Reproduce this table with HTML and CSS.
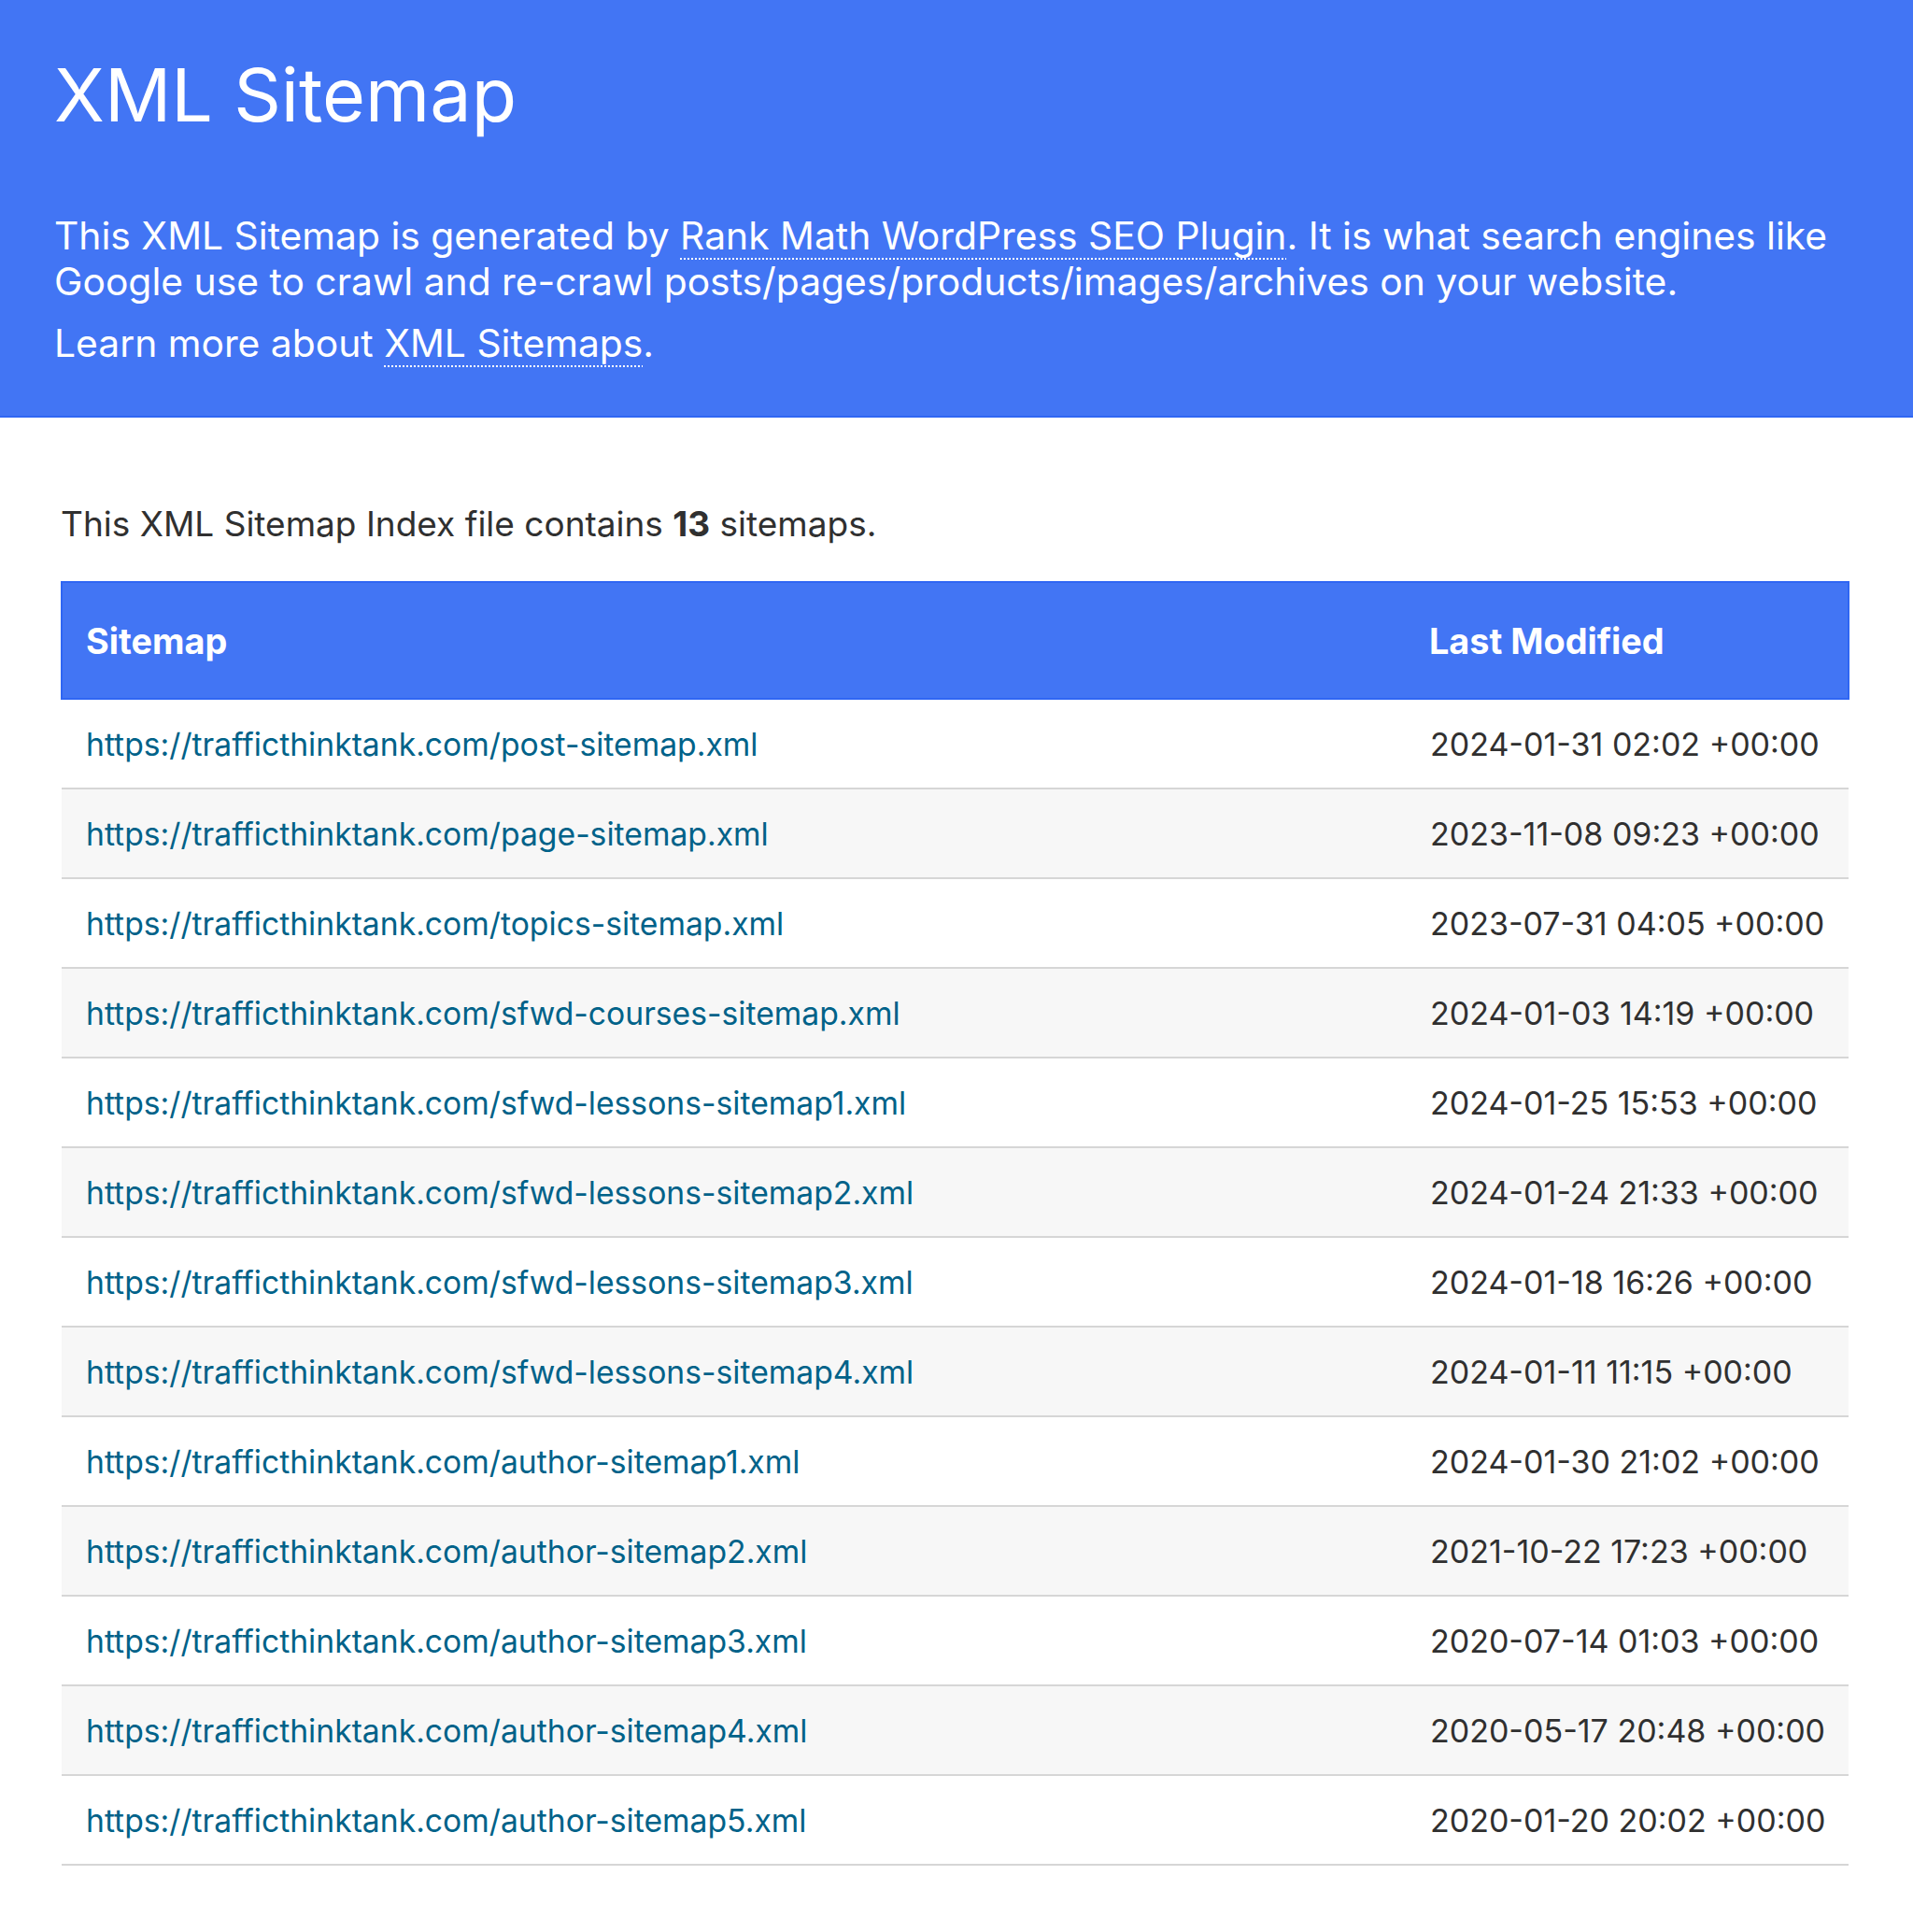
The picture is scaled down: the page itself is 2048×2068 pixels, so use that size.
FILE: index.html
```html
<!DOCTYPE html>
<html lang="en">
<head>
<meta charset="utf-8">
<title>XML Sitemap</title>
<link rel="stylesheet" href="styles.css">
</head>
<body>
<header class="hero">
  <h1 class="hero-title">XML Sitemap</h1>
  <p class="hero-text">This XML Sitemap is generated by <a class="hero-link" href="#">Rank Math WordPress SEO Plugin</a>. It is what search engines like Google use to crawl and re-crawl posts/pages/products/images/archives on your website.</p>
  <p class="hero-text">Learn more about <a class="hero-link" href="#">XML Sitemaps</a>.</p>
</header>
<main class="content">
  <p class="summary">This XML Sitemap Index file contains <strong>13</strong> sitemaps.</p>
  <table class="sitemap-table">
    <colgroup>
      <col class="col-url">
      <col class="col-date">
    </colgroup>
    <thead>
      <tr><th>Sitemap</th><th>Last Modified</th></tr>
    </thead>
    <tbody>
      <tr><td><a href="#">https://trafficthinktank.com/post-sitemap.xml</a></td><td>2024-01-31 02:02 +00:00</td></tr>
      <tr><td><a href="#">https://trafficthinktank.com/page-sitemap.xml</a></td><td>2023-11-08 09:23 +00:00</td></tr>
      <tr><td><a href="#">https://trafficthinktank.com/topics-sitemap.xml</a></td><td>2023-07-31 04:05 +00:00</td></tr>
      <tr><td><a href="#">https://trafficthinktank.com/sfwd-courses-sitemap.xml</a></td><td>2024-01-03 14:19 +00:00</td></tr>
      <tr><td><a href="#">https://trafficthinktank.com/sfwd-lessons-sitemap1.xml</a></td><td>2024-01-25 15:53 +00:00</td></tr>
      <tr><td><a href="#">https://trafficthinktank.com/sfwd-lessons-sitemap2.xml</a></td><td>2024-01-24 21:33 +00:00</td></tr>
      <tr><td><a href="#">https://trafficthinktank.com/sfwd-lessons-sitemap3.xml</a></td><td>2024-01-18 16:26 +00:00</td></tr>
      <tr><td><a href="#">https://trafficthinktank.com/sfwd-lessons-sitemap4.xml</a></td><td>2024-01-11 11:15 +00:00</td></tr>
      <tr><td><a href="#">https://trafficthinktank.com/author-sitemap1.xml</a></td><td>2024-01-30 21:02 +00:00</td></tr>
      <tr><td><a href="#">https://trafficthinktank.com/author-sitemap2.xml</a></td><td>2021-10-22 17:23 +00:00</td></tr>
      <tr><td><a href="#">https://trafficthinktank.com/author-sitemap3.xml</a></td><td>2020-07-14 01:03 +00:00</td></tr>
      <tr><td><a href="#">https://trafficthinktank.com/author-sitemap4.xml</a></td><td>2020-05-17 20:48 +00:00</td></tr>
      <tr><td><a href="#">https://trafficthinktank.com/author-sitemap5.xml</a></td><td>2020-01-20 20:02 +00:00</td></tr>
    </tbody>
  </table>
</main>
</body>
</html>
```
FILE: styles.css
```css
html, body {
  margin: 0;
  padding: 0;
  background: #fff;
}
body {
  font-family: Inter, "Liberation Sans", sans-serif;
  color: #303030;
}
.hero {
  background: #4275f4;
  border-bottom: 2px solid #2f66f3;
  padding: 51px 58px 53px;
  color: #fff;
}
.hero-title {
  margin: 0 0 77px;
  font-size: 79px;
  font-weight: 400;
  line-height: 100px;
}
.hero-text {
  margin: 0;
  font-size: 40.8px;
  line-height: 49px;
}
.hero-text + .hero-text {
  margin-top: 17px;
}
.hero-link {
  color: #fff;
  text-decoration: underline dotted #fff;
  text-decoration-thickness: 2px;
  text-underline-offset: 9px;
}
.content {
  padding: 0 68px 0 65px;
}
.summary {
  margin: 89px 0 36px;
  font-size: 37px;
  line-height: 50px;
}
.summary strong {
  font-weight: 700;
}
.sitemap-table {
  width: 100%;
  table-layout: fixed;
  border-collapse: collapse;
}
.col-url { width: 1439px; }
.sitemap-table th {
  background: #4275f4;
  color: #fff;
  text-align: left;
  font-size: 37.8px;
  font-weight: 700;
  height: 123px;
  padding: 0 25px;
  border-top: 2px solid #2f66f3;
  border-bottom: 2px solid #2f66f3;
}
.sitemap-table th:first-child { border-left: 2px solid #2f66f3; }
.sitemap-table th:last-child { border-right: 2px solid #2f66f3; }
.sitemap-table td {
  height: 94px;
  padding: 0 26px;
  font-size: 34px;
  border-bottom: 2px solid #d6d6d6;
  white-space: nowrap;
}
.sitemap-table td a {
  font-size: 33.7px;
  color: #006289;
  text-decoration: none;
}
.sitemap-table tbody tr:nth-child(even) td {
  background: #f7f7f7;
}
```
